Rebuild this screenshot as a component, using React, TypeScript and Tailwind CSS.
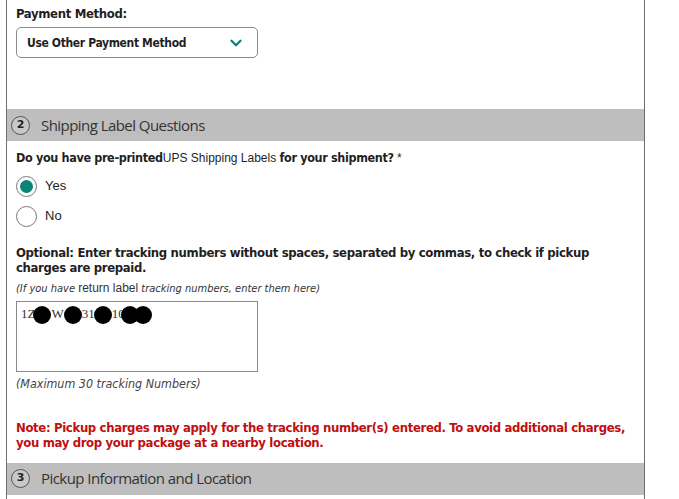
import { ChevronDown } from "lucide-react"

const bold = "font-['Tahoma','DejaVu_Sans_Condensed','Liberation_Sans',sans-serif] font-bold tracking-[-0.35px]"

function SectionBar({ num, title }: { num: string; title: string }) {
  return (
    <div className="h-[32px] bg-[#bebebe] flex items-center gap-[11px] pl-[4px]">
      <span className="w-[19px] h-[19px] rounded-full border border-[#555] flex items-center justify-center text-[11px] font-bold text-[#222] font-['DejaVu_Sans',sans-serif] bg-[#c8c8c8]">
        {num}
      </span>
      <span className="text-[15px] text-[#333] font-['Open_Sans',sans-serif] tracking-[-0.55px]">{title}</span>
    </div>
  )
}

function Radio({ label, checked }: { label: string; checked?: boolean }) {
  return (
    <label className="flex items-center gap-[8px] h-[24px]">
      <span className="w-[21px] h-[21px] rounded-full border border-[#777] bg-white flex items-center justify-center">
        {checked && <span className="w-[13px] h-[13px] rounded-full bg-[#0b8478]" />}
      </span>
      <span className="text-[13px] text-[#222] font-['Liberation_Sans',sans-serif]">{label}</span>
    </label>
  )
}

// redaction blob over the tracking number
function Dot({ className = "" }: { className?: string }) {
  return <span className={`inline-block w-[18px] h-[18px] rounded-full bg-black align-middle ${className}`} />
}

export default function App() {
  return (
    <div className="min-h-screen bg-white">
      <div className="ml-[6px] w-[639px] min-h-[499px] border-x border-[#6f6f6f] text-[#1f1f1f]">

        {/* payment method */}
        <div className="px-[9px] pt-[6px] h-[109px]">
          <div className={`${bold} text-[13px] leading-[16px]`}>Payment Method:</div>
          <div className="mt-[5px] w-[242px] h-[31px] rounded-[5px] border border-[#8a8a8a] flex items-center justify-between pl-[10px] pr-[12px]">
            <span className={`${bold} text-[12px]`}>Use Other Payment Method</span>
            <ChevronDown size={18} strokeWidth={3} className="text-[#0b7f78]" />
          </div>
        </div>

        <SectionBar num="2" title="Shipping Label Questions" />

        <div className="px-[9px] pt-[9px] pb-[13px]">
          <div className="text-[12.5px] leading-[16px]">
            <span className={bold}>Do you have pre-printed</span>
            <span className="font-['Liberation_Sans',sans-serif] text-[12px]">UPS Shipping Labels </span>
            <span className={bold}> for your shipment?</span>
            <span className="font-['Liberation_Sans',sans-serif] text-[12px]"> *</span>
          </div>

          <div className="mt-[8px] flex flex-col gap-[6px]">
            <Radio label="Yes" checked />
            <Radio label="No" />
          </div>

          <div className={`${bold} text-[13px] leading-[15px] mt-[17px]`}>
            Optional: Enter tracking numbers without spaces, separated by commas, to check if pickup charges are prepaid.
          </div>
          <div className="mt-[6px] text-[11px] leading-[14px] italic font-['DejaVu_Sans_Condensed','DejaVu_Sans',sans-serif] text-[#333]">
            (If you have <span className="not-italic font-['Liberation_Sans',sans-serif] text-[12px]">return label</span> tracking numbers, enter them here)
          </div>
          <div className="mt-[5px] w-[242px] h-[71px] border border-[#8a8a8a] px-[4px] pt-[2px] text-[13px] leading-[20px] font-['Liberation_Serif',serif] text-[#333] whitespace-nowrap">
            1Z<Dot className="-ml-[2px]" />W<Dot />31<Dot className="-ml-[1px]" />10<Dot className="-ml-[4px]" /><Dot className="-ml-[5px]" />
          </div>
          <div className="mt-[3px] text-[12.4px] italic font-['DejaVu_Sans_Condensed','DejaVu_Sans',sans-serif] text-[#444]">
            (Maximum 30 tracking Numbers)
          </div>

          <div className={`${bold} mt-[26px] text-[13px] leading-[15px] text-[#c00f0f]`}>
            Note: Pickup charges may apply for the tracking number(s) entered. To avoid additional charges, you may drop your package at a nearby location.
          </div>
        </div>

        <SectionBar num="3" title="Pickup Information and Location" />
      </div>
    </div>
  )
}
